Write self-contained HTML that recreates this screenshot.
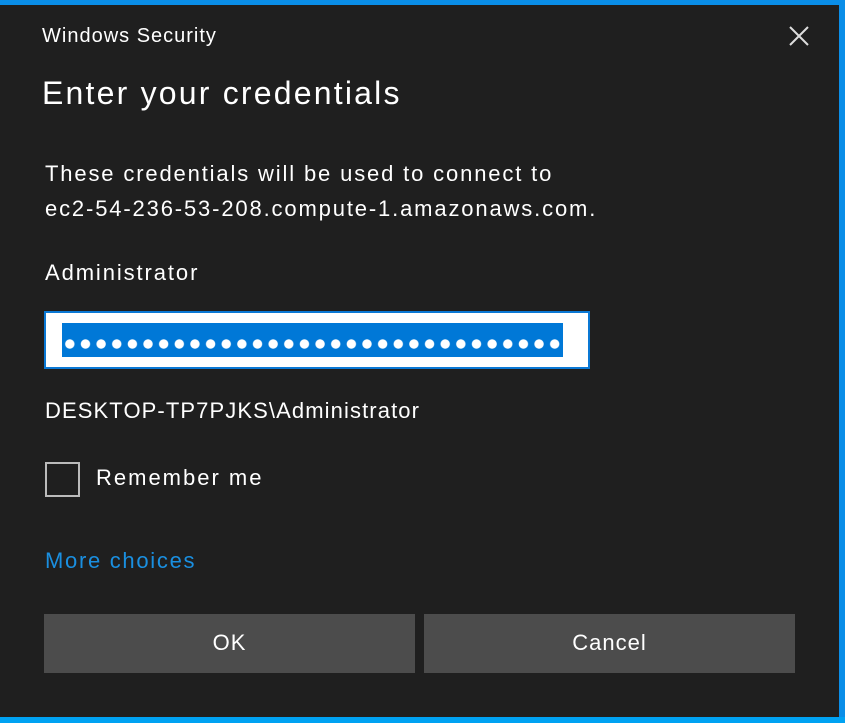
<!DOCTYPE html>
<html><head><meta charset="utf-8"><style>
html,body{margin:0;padding:0;width:845px;height:723px;overflow:hidden;background:#0a8ee8;font-family:"Liberation Sans",sans-serif;color:#fff}
.dlg{position:absolute;left:0;top:5px;width:839px;height:712px;background:#1f1f1f}
.t{position:absolute;white-space:nowrap}
.btn{position:absolute;top:609px;height:59px;background:#4c4c4c;font-size:22px;text-align:center;line-height:58px;letter-spacing:1px}
</style></head><body>
<div style="position:absolute;left:0;top:717px;width:845px;height:6px;background:#00a2f2"></div>
<div class="dlg">
<div class="t" style="left:42px;top:20px;font-size:20px;letter-spacing:1px">Windows Security</div>
<svg style="position:absolute;left:789px;top:21px" width="20" height="20"><path d="M1 1L19 19M19 1L1 19" stroke="#ddd" stroke-width="2"/></svg>
<div class="t" style="left:42px;top:70px;font-size:32px;letter-spacing:2.2px">Enter your credentials</div>
<div class="t" style="left:45px;top:151px;font-size:22px;line-height:35px;letter-spacing:1.85px">These credentials will be used to connect to<br>ec2-54-236-53-208.compute-1.amazonaws.com.</div>
<div class="t" style="left:45px;top:255px;font-size:22px;letter-spacing:1.9px">Administrator</div>
<div style="position:absolute;left:44px;top:306px;height:54px;background:#fff;border:2px solid #0a78d4;width:542px"></div>
<div style="position:absolute;left:62px;top:318px;width:501px;height:34px;background:#0078d7;background-image:radial-gradient(circle,#fff 4.3px,transparent 5px);background-size:15.65px 34px;background-position:0 4px;background-repeat:repeat-x"></div>
<div class="t" style="left:45px;top:393px;font-size:22px;letter-spacing:1.1px">DESKTOP-TP7PJKS\Administrator</div>
<div style="position:absolute;left:45px;top:457px;width:31px;height:31px;border:2px solid #bbb"></div>
<div class="t" style="left:96px;top:460px;font-size:22px;letter-spacing:2px">Remember me</div>
<div class="t" style="left:45px;top:543px;font-size:22px;color:#1a8fe0;letter-spacing:1.7px">More choices</div>
<div class="btn" style="left:44px;width:371px">OK</div>
<div class="btn" style="left:424px;width:371px">Cancel</div>
</div>
</body></html>
